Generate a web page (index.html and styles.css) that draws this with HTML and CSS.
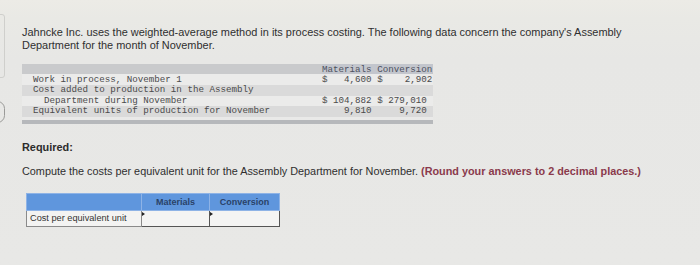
FILE: index.html
```html
<!DOCTYPE html>
<html>
<head>
<meta charset="utf-8">
<link rel="stylesheet" href="styles.css">
</head>
<body>
<div class="edge-box"></div>
<div class="edge-round"></div>
<main class="page">
  <p class="intro">Jahncke Inc. uses the weighted-average method in its process costing. The following data concern the company's Assembly Department for the month of November.</p>

  <div class="data">
    <div class="drow head"><span class="lbl"></span><span class="num hdr">Materials Conversion</span></div>
    <div class="drow first"><span class="lbl">Work in process, November 1</span><span class="num">$   4,600 $    2,902</span></div>
    <div class="drow gray"><span class="lbl">Cost added to production in the Assembly</span><span class="num"></span></div>
    <div class="drow light"><span class="lbl">  Department during November</span><span class="num">$ 104,882 $ 279,010</span></div>
    <div class="drow gray"><span class="lbl">Equivalent units of production for November</span><span class="num">    9,810     9,720</span></div>
    <div class="dgap"></div>
    <div class="dbar"></div>
  </div>

  <h3 class="req">Required:</h3>
  <p class="task">Compute the costs per equivalent unit for the Assembly Department for November. <span class="round">(Round your answers to 2 decimal places.)</span></p>

  <table class="ans">
    <tr class="ahead"><th class="c1"></th><th class="c2">Materials</th><th class="c3">Conversion</th></tr>
    <tr><td class="c1 alabel">Cost per equivalent unit</td><td class="c2 inp"><span class="mark"></span></td><td class="c3 inp"><span class="mark"></span></td></tr>
  </table>
</main>
</body>
</html>
```

FILE: styles.css
```css
html, body {
  margin: 0;
  padding: 0;
}
body {
  width: 700px;
  height: 265px;
  overflow: hidden;
  background: linear-gradient(#ecebe6 0px, #e9e9e5 18px, #e7e7e5 60px, #e8e8e6 265px);
  font-family: "Liberation Sans", Arial, sans-serif;
  color: #333;
  position: relative;
}
.edge-box {
  position: absolute;
  left: -6px;
  top: 14px;
  width: 9px;
  height: 62px;
  border: 1px solid #cfcfcc;
  border-radius: 3px;
}
.edge-round {
  position: absolute;
  left: -10px;
  top: 101px;
  width: 13px;
  height: 20px;
  border: 1px solid #9a9a98;
  border-radius: 8px;
}
.page {
  padding: 26px 0 0 22px;
}
.intro {
  margin: 0;
  width: 640px;
  font-size: 10.95px;
  line-height: 13px;
  color: #2f2f2f;
}
.data {
  margin-top: 12px;
  width: 411px;
  font-family: "Liberation Mono", "Courier New", monospace;
  font-size: 9.2px;
  color: #4a4a4a;
}
.drow {
  display: flex;
  height: 10.5px;
  line-height: 10.5px;
  white-space: pre;
}
.drow.head {
  height: 10px;
  line-height: 11px;
  background: #c9cacc;
}
.drow.first {
  height: 11px;
  line-height: 11px;
  background: #ebebea;
}
.drow.light { background: #ebebea; }
.drow.gray { background: #dadada; }
.lbl {
  flex: 1;
  padding-left: 11px;
}
.num {
  width: 111px;
}
.hdr {
  background: #c3c6cd;
  color: #4d5160;
}
.dgap {
  height: 3.5px;
  background: #e9e9e8;
}
.dbar {
  height: 4px;
  background: #b6b8bb;
}
.req {
  margin: 17px 0 0 0;
  font-size: 10.9px;
  line-height: 13px;
  font-weight: bold;
  color: #2c2c2c;
}
.task {
  margin: 11px 0 0 0;
  font-size: 10.85px;
  line-height: 13px;
  color: #2f2f2f;
}
.round {
  font-weight: bold;
  color: #8a3a4c;
}
.ans {
  margin: 15px 0 0 4px;
  border-collapse: collapse;
  font-size: 9.2px;
}
.ans th, .ans td {
  padding: 0;
  height: 15.5px;
}
.ahead th {
  background: #5f96dd;
  border: 1px solid #8eb3e6;
  color: #2a4268;
  font-weight: bold;
  font-size: 9px;
  text-align: center;
}
.c1 { width: 111px; }
.c2 { width: 67px; }
.c3 { width: 69px; }
.ans td.alabel {
  border: 1px solid #8a8a8a;
  background: #f3f3f2;
  padding-left: 3px;
  color: #333;
}
.inp {
  border: 1px solid #555;
  background: #f4f4f3;
  position: relative;
  vertical-align: top;
}
.mark {
  position: absolute;
  left: 0;
  top: 1px;
  width: 0;
  height: 0;
  border-top: 2px solid transparent;
  border-bottom: 2px solid transparent;
  border-left: 3px solid #222;
}
```
